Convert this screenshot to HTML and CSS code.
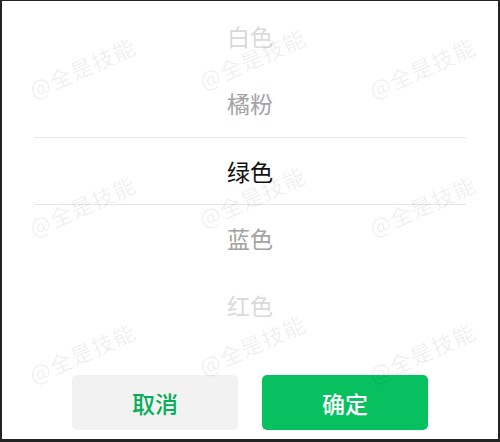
FILE: index.html
```html
<!DOCTYPE html>
<html lang="zh-CN">
<head>
    <meta charset="UTF-8">
    <meta name="viewport" content="width=device-width, initial-scale=1.0">
    <title>选择颜色</title>
    <link rel="stylesheet" href="styles.css">
</head>
<body>
    <div class="frame">
        <div class="picker">
            <div class="pickerItem far first">白色</div>
            <div class="pickerItem near second">橘粉</div>
            <div class="pickerItem selected">绿色</div>
            <div class="pickerItem near">蓝色</div>
            <div class="pickerItem far">红色</div>
        </div>

        <div class="actions">
            <button class="btn cancel">取消</button>
            <button class="btn confirm">确定</button>
        </div>

        <div class="watermarks">
            <span class="mark" style="left: 80px; top: 66px;">@全是技能</span>
            <span class="mark" style="left: 250px; top: 57px;">@全是技能</span>
            <span class="mark" style="left: 420px; top: 66px;">@全是技能</span>
            <span class="mark" style="left: 80px; top: 204px;">@全是技能</span>
            <span class="mark" style="left: 250px; top: 195px;">@全是技能</span>
            <span class="mark" style="left: 420px; top: 204px;">@全是技能</span>
            <span class="mark" style="left: 80px; top: 351px;">@全是技能</span>
            <span class="mark" style="left: 250px; top: 343px;">@全是技能</span>
            <span class="mark" style="left: 420px; top: 351px;">@全是技能</span>
        </div>
    </div>
</body>
</html>
```

FILE: styles.css
```css
* {
    box-sizing: border-box;
}

body {
    margin: 0;
    font-family: "Noto Sans CJK SC", "Noto Sans", sans-serif;
    background-color: #fff;
}

.frame {
    position: relative;
    width: 500px;
    height: 442px;
    border-style: solid;
    border-color: #232323;
    border-width: 1px 2px 3px 2px;
    background-color: #fff;
    overflow: hidden;
}

.picker {
    display: flex;
    flex-direction: column;
    padding-top: 2px;
}

.pickerItem {
    display: flex;
    align-items: center;
    justify-content: center;
    height: 66px;
    font-size: 23px;
    line-height: 1;
}

.pickerItem.first {
    height: 67px;
}

.pickerItem.second {
    height: 62px;
}

.pickerItem.far {
    color: #dadada;
}

.pickerItem.near {
    color: #a3a3a3;
    height: 67px;
}

.pickerItem.selected {
    height: 68px;
    margin: 0 32px;
    border-top: 1px solid #e6e6e6;
    border-bottom: 1px solid #e6e6e6;
    color: #111;
}

.actions {
    display: flex;
    justify-content: center;
    gap: 24px;
    margin-top: 37px;
}

.btn {
    width: 166px;
    height: 55px;
    border: none;
    border-radius: 5px;
    font-family: inherit;
    font-size: 23px;
    font-weight: 500;
    cursor: pointer;
}

.btn.cancel {
    background-color: #f2f2f2;
    color: #08ad59;
}

.btn.confirm {
    background-color: #07c160;
    color: #fff;
}

.watermarks {
    position: absolute;
    inset: 0;
    pointer-events: none;
}

.mark {
    position: absolute;
    transform: translate(-50%, -50%) rotate(-24deg);
    font-size: 22px;
    letter-spacing: 1px;
    color: rgba(0, 0, 0, 0.07);
    white-space: nowrap;
}
```
